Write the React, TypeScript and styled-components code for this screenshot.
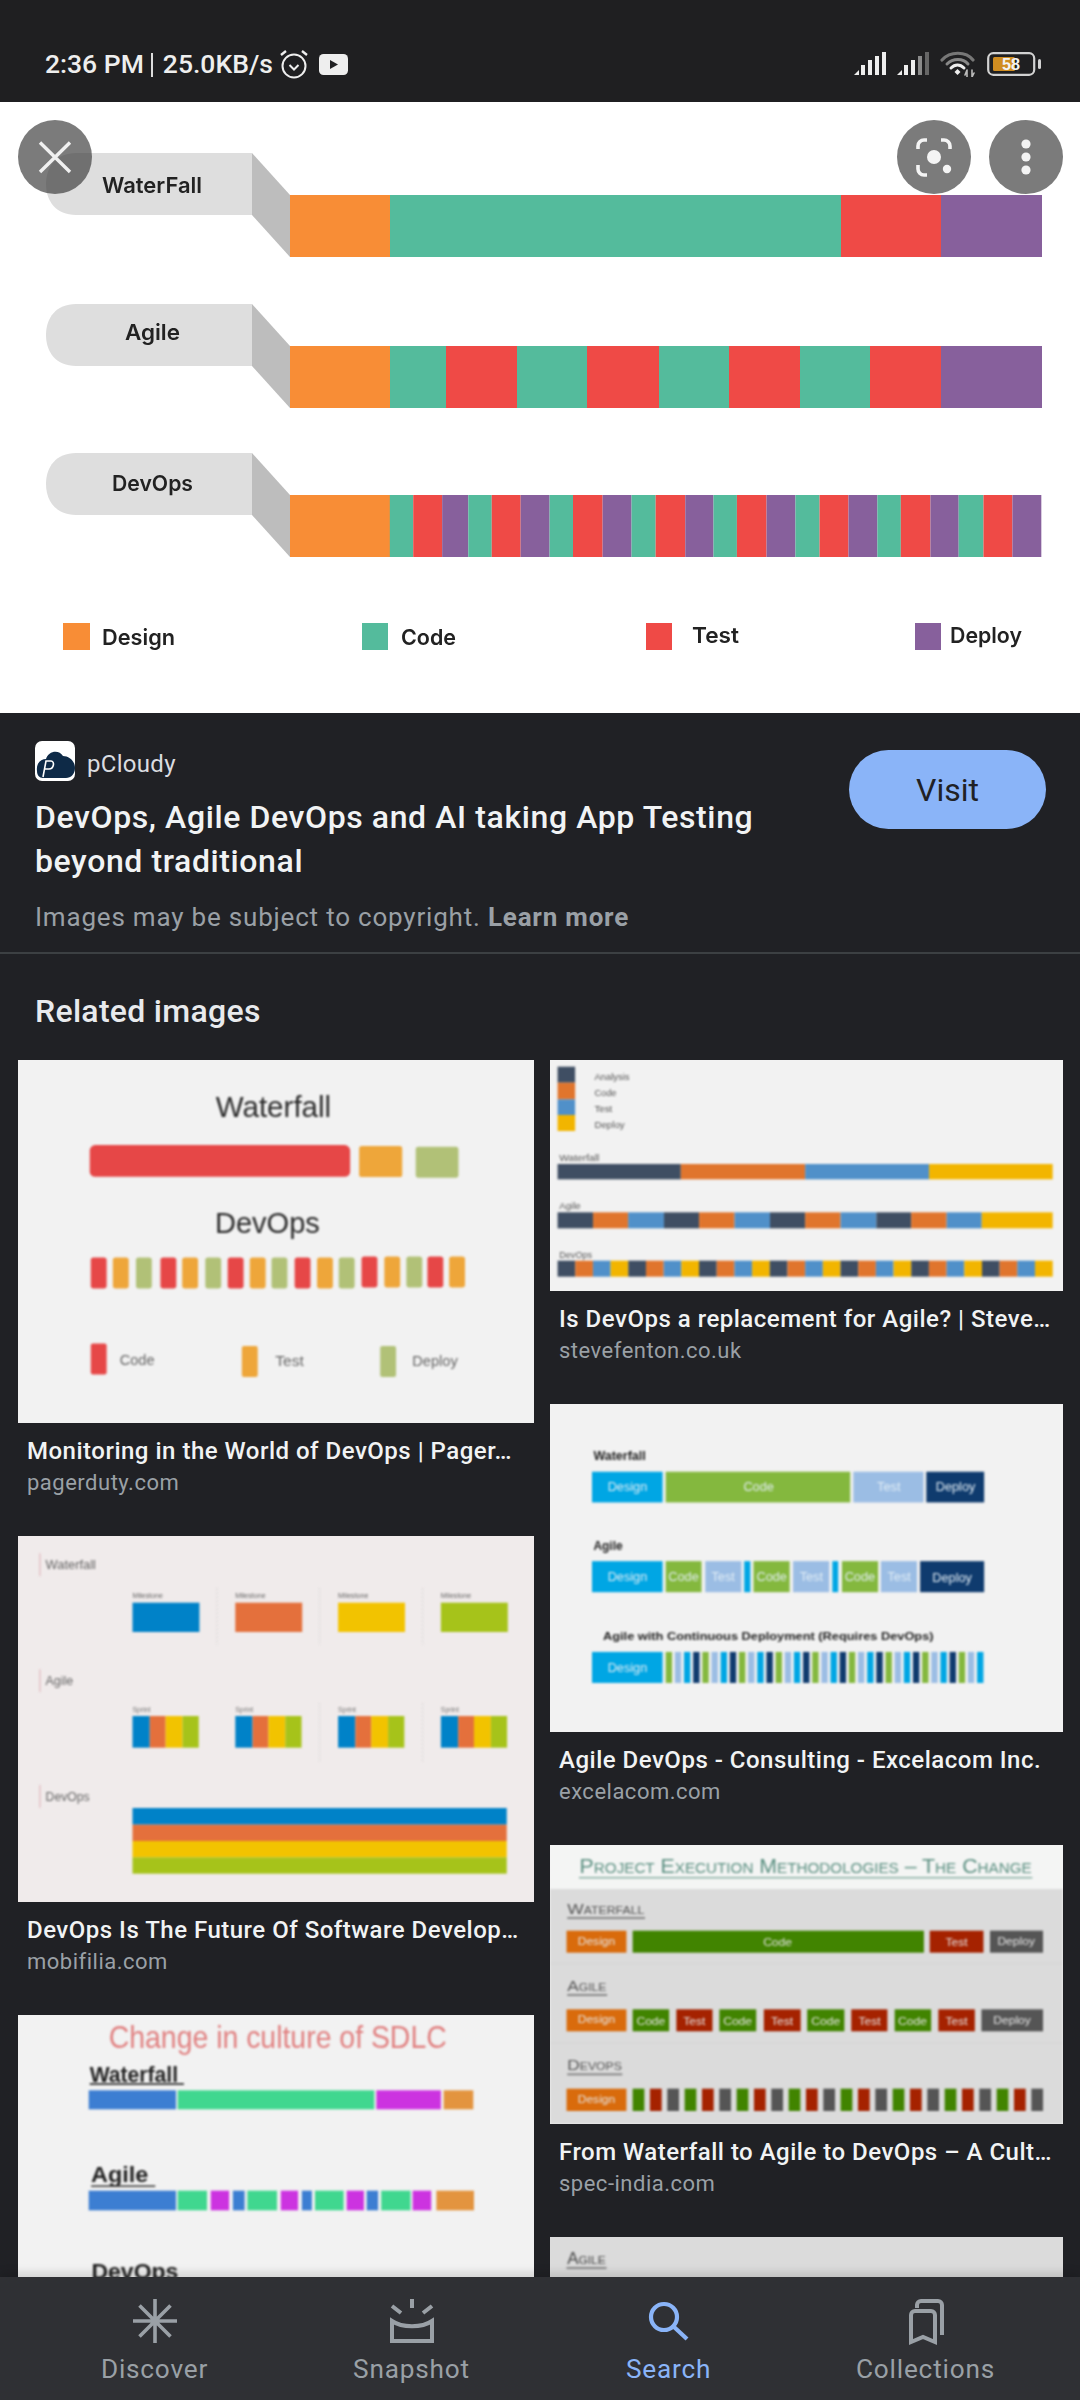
import React from 'react';
import styled, {createGlobalStyle} from 'styled-components';

const GlobalStyle = createGlobalStyle`
  html, body {
    margin: 0;
    padding: 0;
    background: #202125;
  }
`

const Page = styled.div`
  width: 1080px;
  height: 2400px;
  display: flex;
  flex-direction: column;
  overflow: hidden;
  background: #202125;
  font-family: Roboto, "Liberation Sans", sans-serif;
`
const StatusBar = styled.div`
  flex: 0 0 102px;
  box-sizing: border-box;
  padding: 26px 39px 0 45px;
  display: flex;
  align-items: center;
  background: #1f1f21;
  color: #eeeeee;
`
const Clock = styled.span`
  font-size: 26.5px;
  font-weight: 500;
  line-height: 32px;
  white-space: nowrap;
`
const Pipe = styled.span`
  width: 2px;
  height: 24px;
  margin: 2px 10px 0 7px;
  background: #dddddd;
`
const StatusLeft = styled.div`
  display: flex;
  align-items: center;
  flex: 1 1 auto;
`
const StatusRight = styled.div`
  display: flex;
  align-items: center;
  gap: 11px;
`
const Main = styled.main`
  flex: 1 1 auto;
  min-height: 0;
  overflow: hidden;
`
const Hero = styled.section`
  position: relative;
  height: 611px;
  background: #ffffff;
`
const Blurred = styled.svg<{$blur?: number}>`
  display: block;
  width: 100%;
  height: 100%;
  filter: blur(${p => p.$blur ?? 0.9}px);
`
const HeroActions = styled.div`
  position: absolute;
  top: 18px;
  left: 18px;
  right: 17px;
  display: flex;
  justify-content: space-between;
`
const ActionGroup = styled.div`
  display: flex;
  gap: 18px;
`
const RoundButton = styled.div`
  width: 74px;
  height: 74px;
  border-radius: 50%;
  background: rgba(60, 60, 60, 0.68);
  display: flex;
`
const InfoPanel = styled.section`
  display: flex;
  align-items: flex-start;
  border-bottom: 2px solid #3c4043;
  height: 241px;
  box-sizing: border-box;
`
const InfoText = styled.div`
  flex: 1 1 auto;
  padding: 28px 0 0 35px;
`
const SourceRow = styled.div`
  display: flex;
  align-items: center;
  gap: 12px;
  height: 40px;
`
const SourceLogo = styled.div`
  width: 40px;
  height: 40px;
  border-radius: 7px;
  background: #ffffff;
  overflow: hidden;
`
const SourceName = styled.span`
  padding-top: 5px;
  font-size: 24px;
  color: #dadce0;
  letter-spacing: 0.3px;
`
const ImageTitle = styled.h1`
  margin: 14px 0 0;
  max-width: 760px;
  font-size: 32px;
  font-weight: 500;
  line-height: 44px;
  letter-spacing: 0.6px;
  color: #f1f3f4;
`
const Copyright = styled.p`
  margin: 19px 0 0;
  font-size: 26px;
  line-height: 30px;
  letter-spacing: 0.8px;
  color: #9aa0a6;

  b {
    font-weight: 700;
  }
`
const VisitButton = styled.div`
  flex: 0 0 197px;
  height: 79px;
  margin: 37px 34px 0 0;
  border-radius: 40px;
  background: #8ab4f8;
  color: #202125;
  font-size: 32px;
  font-weight: 400;
  display: flex;
  align-items: center;
  justify-content: center;
`
const SectionTitle = styled.h2`
  margin: 0;
  padding: 39px 35px 31px;
  font-size: 32px;
  font-weight: 500;
  line-height: 36px;
  letter-spacing: 0.3px;
  color: #e8eaed;
`
const Columns = styled.div`
  display: grid;
  grid-template-columns: 516px 513px;
  column-gap: 16px;
  padding-left: 18px;
`
const Column = styled.div`
  display: flex;
  flex-direction: column;
`
const Thumb = styled.div<{$h: number; $bg?: string}>`
  height: ${p => p.$h}px;
  background: ${p => p.$bg ?? '#f2f2f2'};
  overflow: hidden;
`
const Caption = styled.div`
  height: 113px;
  box-sizing: border-box;
  padding: 12px 9px 0;
`
const CaptionTitle = styled.div`
  font-size: 24px;
  font-weight: 500;
  line-height: 32px;
  letter-spacing: 0.5px;
  white-space: nowrap;
  color: #f1f3f4;
`
const CaptionSite = styled.div`
  margin-top: 1px;
  font-size: 22px;
  line-height: 30px;
  letter-spacing: 0.5px;
  color: #9aa0a6;
`
const BottomNav = styled.nav`
  position: relative;
  flex: 0 0 123px;
  box-sizing: border-box;
  padding: 16px 26px 0;
  display: grid;
  grid-template-columns: repeat(4, 257px);
  background: #2f3034;
  box-shadow: 0 -5px 8px rgba(0, 0, 0, 0.12);
`
const NavItem = styled.div<{$active?: boolean}>`
  display: flex;
  flex-direction: column;
  align-items: center;
  color: ${p => (p.$active ? '#8ab4f8' : '#9aa0a6')};
`
const NavLabel = styled.span`
  margin-top: 5px;
  font-size: 26.2px;
  line-height: 30px;
  letter-spacing: 0.8px;
`
const T = styled.text`
  font-family: "Liberation Sans", Arial, sans-serif;
`
const HeroText = styled.text`
  font-family: Inter, "Liberation Sans", sans-serif;
  font-size: 22px;
  font-weight: 600;
  fill: #222222;
`

type Span = [number, number, string];

// contiguous segments: edges[i]..edges[i+1], colours repeat
const Segments = ({edges, colors, y, h}: {edges: number[]; colors: string[]; y: number; h: number}) => (
    <>
        {edges.slice(0, -1).map((e, i) => (
            <rect key={i} x={e} y={y} width={edges[i + 1] - e} height={h} fill={colors[i % colors.length]}/>
        ))}
    </>
)
const Blocks = ({spans, y, h, rx}: {spans: Span[]; y: number; h: number; rx?: number}) => (
    <>
        {spans.map(([a, b, c], i) => (
            <rect key={i} x={a} y={y} width={b - a} height={h} rx={rx} fill={c}/>
        ))}
    </>
)
const Strips = ({start, step, width, count, colors, y, h}: {start: number; step: number; width: number; count: number; colors: string[]; y: number; h: number}) => (
    <>
        {Array.from({length: count}, (_, i) => (
            <rect key={i} x={start + i * step} y={y} width={width} height={h} fill={colors[i % colors.length]}/>
        ))}
    </>
)

const ORANGE = '#f88d36', TEAL = '#54bb9c', RED = '#ef4a46', PURPLE = '#87609c';

const HeroLabel = ({y, base, text, x, w}: {y: number; base: number; text: string; x: number; w: number}) => (
    <>
        <path d={`M252 ${y} L290 ${y + 42} V${y + 104} L252 ${y + 62} Z`} fill="#bdbdbd"/>
        <path d={`M76 ${y} H252 V${y + 62} H76 C56 ${y + 62} 46 ${y + 48} 46 ${y + 31} C46 ${y + 14} 56 ${y} 76 ${y} Z`} fill="#dedede"/>
        <HeroText x={x} y={base} textLength={w} lengthAdjust="spacingAndGlyphs">{text}</HeroText>
    </>
)

const HeroChart = () => (
    <Blurred viewBox="0 102 1080 611" $blur={0.5}>
        <HeroLabel y={153} base={193} text="WaterFall" x={102} w={100}/>
        <HeroLabel y={304} base={340} text="Agile" x={125} w={55}/>
        <HeroLabel y={453} base={491} text="DevOps" x={112} w={81}/>
        <Segments y={195} h={62} edges={[290, 390, 841, 941, 1042]} colors={[ORANGE, TEAL, RED, PURPLE]}/>
        <Segments y={346} h={62} edges={[290, 390, 446, 517, 587, 659, 729, 800, 870, 941, 1042]}
                  colors={[ORANGE, TEAL, RED, TEAL, RED, TEAL, RED, TEAL, RED, PURPLE]}/>
        <rect x={290} y={495} width={100} height={62} fill={ORANGE}/>
        <Segments y={495} h={62}
                  edges={[566, 600, 642, 680, 714, 756, 798, 832, 875, 917, 952, 995, 1036, 1070, 1113, 1155, 1190, 1232, 1274, 1308, 1351, 1392, 1428, 1470, 1512].map(z => z / 1.452)}
                  colors={[TEAL, RED, PURPLE]}/>
        <rect x={63} y={623} width={27} height={27} fill={ORANGE}/>
        <HeroText x={102} y={645} textLength={73} lengthAdjust="spacingAndGlyphs">Design</HeroText>
        <rect x={362} y={623} width={26} height={27} fill={TEAL}/>
        <HeroText x={401} y={645} textLength={55} lengthAdjust="spacingAndGlyphs">Code</HeroText>
        <rect x={646} y={623} width={26} height={27} fill={RED}/>
        <HeroText x={692} y={643} textLength={47} lengthAdjust="spacingAndGlyphs">Test</HeroText>
        <rect x={915} y={623} width={26} height={27} fill={PURPLE}/>
        <HeroText x={950} y={643} textLength={72} lengthAdjust="spacingAndGlyphs">Deploy</HeroText>
    </Blurred>
)

// thumbnails are drawn in a 3x coordinate space, roughly 3 units per screen pixel
const PagerDuty = () => {
    const red = '#e64747', amber = '#eea63a', olive = '#b1c177';
    const small = [263, 327, 394, 465, 528, 595, 660, 724, 787, 854, 919, 982, 1048, 1114, 1178, 1239, 1302];
    return (
        <Blurred viewBox="52 30 1496 1088" preserveAspectRatio="none">
            <T x={625} y={200} fontSize={88} fill="#2a2a2a" textLength={335} lengthAdjust="spacingAndGlyphs">Waterfall</T>
            <rect x={260} y={285} width={755} height={95} rx={16} fill={red}/>
            <rect x={1041} y={288} width={125} height={93} rx={8} fill={amber}/>
            <rect x={1205} y={290} width={124} height={93} rx={8} fill={olive}/>
            <T x={623} y={548} fontSize={88} fill="#2a2a2a" textLength={304} lengthAdjust="spacingAndGlyphs">DevOps</T>
            {small.map((x, i) => (
                <rect key={x} x={x} y={i > 11 ? 619 : 622} width={46} height={93} rx={8} fill={[red, amber, olive][i % 3]}/>
            ))}
            <rect x={263} y={880} width={46} height={93} rx={6} fill={red}/>
            <T x={347} y={945} fontSize={43} fill="#666" textLength={101} lengthAdjust="spacingAndGlyphs">Code</T>
            <rect x={701} y={887} width={46} height={93} rx={6} fill={amber}/>
            <T x={798} y={948} fontSize={43} fill="#666" textLength={83} lengthAdjust="spacingAndGlyphs">Test</T>
            <rect x={1102} y={887} width={46} height={93} rx={6} fill={olive}/>
            <T x={1195} y={948} fontSize={43} fill="#666" textLength={132} lengthAdjust="spacingAndGlyphs">Deploy</T>
        </Blurred>
    )
}

const SteveFenton = () => {
    const navy = '#3f4e63', orange = '#e0752d', blue = '#5090c9', yellow = '#f2b500';
    const four = [navy, orange, blue, yellow];
    return (
        <Blurred viewBox="29 30 1490 693" preserveAspectRatio="none">
            <rect x={51} y={50} width={51} height={48} fill={navy}/>
            <rect x={51} y={98} width={51} height={50} fill={orange}/>
            <rect x={51} y={148} width={51} height={47} fill={blue}/>
            <rect x={51} y={195} width={51} height={48} fill={yellow}/>
            <T x={158} y={90} fontSize={26} fill="#555" textLength={102} lengthAdjust="spacingAndGlyphs">Analysis</T>
            <T x={158} y={138} fontSize={26} fill="#555" textLength={64} lengthAdjust="spacingAndGlyphs">Code</T>
            <T x={158} y={186} fontSize={26} fill="#555" textLength={52} lengthAdjust="spacingAndGlyphs">Test</T>
            <T x={158} y={235} fontSize={26} fill="#555" textLength={88} lengthAdjust="spacingAndGlyphs">Deploy</T>
            <T x={56} y={333} fontSize={26} fill="#555" textLength={116} lengthAdjust="spacingAndGlyphs">Waterfall</T>
            <Segments y={342} h={46} edges={[51, 409, 770, 1130, 1489]} colors={four}/>
            <T x={56} y={478} fontSize={26} fill="#555" textLength={62} lengthAdjust="spacingAndGlyphs">Agile</T>
            <Segments y={487} h={48} edges={[51, 154, 256, 360, 462, 565, 668, 770, 873, 977, 1078, 1181, 1283, 1489]}
                      colors={[navy, orange, blue, navy, orange, blue, navy, orange, blue, navy, orange, blue, yellow]}/>
            <T x={56} y={625} fontSize={26} fill="#555" textLength={95} lengthAdjust="spacingAndGlyphs">DevOps</T>
            <Segments y={632} h={48} edges={Array.from({length: 29}, (_, i) => 51 + i * 51.36)} colors={four}/>
        </Blurred>
    )
}

const Excelacom = () => {
    const sky = '#00a6e4', green = '#84b83e', pale = '#9bbde4', navy = '#0f3b6e';
    const ink = '#222';
    const on = {fontSize: 37, fill: '#e3eef5', textAnchor: 'middle' as const};
    return (
        <Blurred viewBox="29 12 1490 983" preserveAspectRatio="none">
            <T x={155} y={180} fontSize={36} fontWeight={700} fill={ink} textLength={152} lengthAdjust="spacingAndGlyphs">Waterfall</T>
            <Blocks y={215} h={92} spans={[[151, 356, sky], [365, 901, green], [910, 1114, pale], [1122, 1290, navy]]}/>
            <T x={254} y={274} {...on}>Design</T>
            <T x={635} y={274} {...on}>Code</T>
            <T x={1013} y={274} {...on}>Test</T>
            <T x={1207} y={274} {...on}>Deploy</T>
            <T x={155} y={450} fontSize={36} fontWeight={700} fill={ink} textLength={85} lengthAdjust="spacingAndGlyphs">Agile</T>
            <Blocks y={483} h={93} spans={[
                [151, 356, sky], [365, 469, green], [480, 585, pale], [593, 611, sky], [620, 725, green], [735, 840, pale],
                [849, 866, sky], [877, 982, green], [990, 1095, pale], [1104, 1290, navy]]}/>
            <T x={254} y={543} {...on}>Design</T>
            <T x={417} y={543} {...on}>Code</T>
            <T x={532} y={543} {...on}>Test</T>
            <T x={673} y={543} {...on}>Code</T>
            <T x={788} y={543} {...on}>Test</T>
            <T x={929} y={543} {...on}>Code</T>
            <T x={1043} y={543} {...on}>Test</T>
            <T x={1197} y={546} {...on}>Deploy</T>
            <T x={183} y={720} fontSize={35} fontWeight={700} fill={ink} textLength={960} lengthAdjust="spacingAndGlyphs">Agile with Continuous Deployment (Requires DevOps)</T>
            <rect x={151} y={755} width={205} height={93} fill={sky}/>
            <T x={254} y={815} {...on}>Design</T>
            <Strips y={755} h={93} start={365} step={26.6} width={18.5} count={35} colors={[green, pale, sky, navy]}/>
        </Blurred>
    )
}

const Mobifilia = () => {
    const blue = '#0082c8', orange = '#e4703c', yellow = '#f2c300', lime = '#a6c31a';
    const cols = [384, 682, 980, 1278];
    const sprint = [0, 50, 96, 145, 192];
    return (
        <Blurred viewBox="52 18 1496 1098" preserveAspectRatio="none">
            {[70, 418, 765].map(y => <rect key={y} x={113} y={y} width={5} height={68} fill="#e6c8cc"/>)}
            <T x={132} y={118} fontSize={38} fill="#666" textLength={146} lengthAdjust="spacingAndGlyphs">Waterfall</T>
            <T x={132} y={465} fontSize={38} fill="#666" textLength={80} lengthAdjust="spacingAndGlyphs">Agile</T>
            <T x={132} y={813} fontSize={38} fill="#666" textLength={128} lengthAdjust="spacingAndGlyphs">DevOps</T>
            {cols.map((x, i) => (
                <React.Fragment key={x}>
                    <T x={x} y={205} fontSize={22} fill="#666" textLength={88} lengthAdjust="spacingAndGlyphs">Milestone</T>
                    <rect x={x} y={218} width={194} height={88} fill={[blue, orange, yellow, lime][i]}/>
                    <T x={x} y={545} fontSize={22} fill="#777" textLength={52} lengthAdjust="spacingAndGlyphs">Sprint</T>
                    <Segments y={558} h={95} edges={sprint.map(s => s + x)} colors={[blue, orange, yellow, lime]}/>
                </React.Fragment>
            ))}
            {[629, 926, 1225].map(x => (
                <line key={x} x1={x} x2={x} y1={175} y2={345} stroke="#d8d6d6" strokeWidth={3} strokeDasharray="6 6"/>
            ))}
            {[926, 1225].map(x => (
                <line key={x} x1={x} x2={x} y1={520} y2={695} stroke="#d8d6d6" strokeWidth={3} strokeDasharray="6 6"/>
            ))}
            <rect x={384} y={834} width={1085} height={50} fill={blue}/>
            <rect x={384} y={884} width={1085} height={49} fill={orange}/>
            <rect x={384} y={933} width={1085} height={49} fill={yellow}/>
            <rect x={384} y={982} width={1085} height={49} fill={lime}/>
        </Blurred>
    )
}

const SpecIndia = () => {
    const orange = '#d96b0c', green = '#418400', red = '#a52200', grey = '#555555';
    const on = {fontSize: 35, fill: '#e6e6e6', textAnchor: 'middle' as const};
    const heading = {fontSize: 46, fill: '#555', fontVariant: 'small-caps', lengthAdjust: 'spacingAndGlyphs' as const};
    return (
        <Blurred viewBox="29 48 1490 837" preserveAspectRatio="none">
            <rect x={29} y={48} width={1490} height={132} fill="#f4f5f4"/>
            <rect x={29} y={180} width={1490} height={705} fill="#dbdbdb"/>
            <T x={115} y={132} fontSize={58} fill="#5a8f80" fontVariant="small-caps" textLength={1313} lengthAdjust="spacingAndGlyphs">Project Execution Methodologies – The Change</T>
            <rect x={113} y={144} width={1317} height={4} fill="#7ea99c"/>

            <T x={79} y={255} {...heading} textLength={224}>Waterfall</T>
            <rect x={79} y={264} width={226} height={6} fill="#888"/>
            <Blocks y={305} h={66} spans={[[77, 251, orange], [269, 1115, green], [1132, 1288, red], [1307, 1461, grey]]}/>
            <T x={164} y={347} {...on}>Design</T>
            <T x={690} y={352} {...on}>Code</T>
            <T x={1210} y={350} {...on}>Test</T>
            <T x={1383} y={349} {...on}>Deploy</T>
            <rect x={29} y={402} width={1490} height={3} fill="#d5d5d5"/>

            <T x={79} y={487} {...heading} textLength={114}>Agile</T>
            <rect x={79} y={495} width={116} height={6} fill="#888"/>
            <Blocks y={541} h={66} spans={[
                [77, 251, orange], [269, 375, green], [396, 501, red], [521, 628, green], [650, 757, red], [776, 884, green],
                [904, 1009, red], [1030, 1136, green], [1157, 1263, red], [1282, 1461, grey]]}/>
            <T x={164} y={583} {...on}>Design</T>
            {[322, 574, 830, 1082].map(x => <T key={x} x={x} y={587} {...on}>Code</T>)}
            {[448, 703, 957, 1210].map(x => <T key={x} x={x} y={587} {...on}>Test</T>)}
            <T x={1371} y={586} {...on}>Deploy</T>
            <rect x={29} y={641} width={1490} height={3} fill="#d5d5d5"/>

            <T x={79} y={724} {...heading} textLength={159}>Devops</T>
            <rect x={79} y={733} width={160} height={6} fill="#888"/>
            <rect x={77} y={779} width={174} height={67} fill={orange}/>
            <T x={164} y={821} {...on}>Design</T>
            <Strips y={779} h={67} start={269} step={50.35} width={34} count={24} colors={[green, red, grey]}/>
        </Blurred>
    )
}

const AgileTeaser = () => (
    <Blurred viewBox="29 1224 1490 600" preserveAspectRatio="none">
        <T x={79} y={1305} fontSize={50} fill="#444" fontVariant="small-caps" textLength={112} lengthAdjust="spacingAndGlyphs">Agile</T>
        <rect x={77} y={1314} width={116} height={6} fill="#888"/>
    </Blurred>
)

const CultureChart = () => {
    const blue = '#3c7ed2', green = '#40d78f', pink = '#cc33e0', orange = '#e3943f';
    return (
        <Blurred viewBox="52 45 1496 1098" preserveAspectRatio="none">
            <T x={315} y={145} fontSize={96} fill="#e08080" textLength={980} lengthAdjust="spacingAndGlyphs">Change in culture of SDLC</T>
            <T x={260} y={245} fontSize={66} fontWeight={700} fill="#222" textLength={256} lengthAdjust="spacingAndGlyphs">Waterfall</T>
            <rect x={260} y={249} width={273} height={6} fill="#444"/>
            <Blocks y={271} h={57} spans={[[257, 510, blue], [515, 1085, green], [1091, 1278, pink], [1286, 1372, orange]]}/>
            <T x={264} y={545} fontSize={66} fontWeight={700} fill="#222" textLength={166} lengthAdjust="spacingAndGlyphs">Agile</T>
            <rect x={264} y={556} width={186} height={5} fill="#444"/>
            <Blocks y={572} h={59} spans={[
                [257, 510, blue], [515, 600, green], [611, 664, pink], [675, 709, blue], [717, 803, green], [814, 864, pink],
                [875, 904, blue], [913, 996, green], [1005, 1055, pink], [1063, 1096, blue], [1105, 1190, green], [1196, 1250, pink], [1265, 1374, orange]]}/>
            <T x={265} y={838} fontSize={66} fontWeight={700} fill="#222" textLength={252} lengthAdjust="spacingAndGlyphs">DevOps</T>
        </Blurred>
    )
}

const SignalIcon = ({dim}: {dim?: boolean}) => (
    <svg width="32" height="24" viewBox="0 0 32 24">
        <path d="M0 23 L5 18 V23 Z" fill="#eee"/>
        <rect x="7" y="13" width="4" height="10" fill="#eee"/>
        <rect x="14" y="8" width="4" height="15" fill="#eee"/>
        <rect x="21" y="4" width="4" height="19" fill={dim ? '#8a8a8a' : '#eee'}/>
        <rect x="28" y="0" width="4" height="23" fill={dim ? '#666' : '#eee'}/>
    </svg>
)

const WifiIcon = () => (
    <svg width="36" height="26" viewBox="0 0 36 26" fill="none" strokeLinecap="round">
        <path d="M2 9 C10 0 26 0 33 9" stroke="#777" strokeWidth="3.2"/>
        <path d="M7 13 C13 7 23 7 28 13" stroke="#888" strokeWidth="3"/>
        <path d="M11 17 C15 13 20 13 24 17" stroke="#eee" strokeWidth="3"/>
        <path d="M14.5 21 L17.5 18 L20.5 21 L17.5 24 Z" fill="#eee"/>
        <path d="M27 19 V26 M27 19 L25 24 M32 19 V26 M32 26 L34 22" stroke="#bbb" strokeWidth="1.6"/>
    </svg>
)

const BatteryIcon = () => (
    <svg width="54" height="24" viewBox="0 0 54 24">
        <rect x="1.2" y="1.2" width="46" height="21.6" rx="5" fill="none" stroke="#d2d2d2" strokeWidth="2.2"/>
        <rect x="6" y="5" width="22" height="14" rx="1.5" fill="#d08d21"/>
        <rect x="51" y="7" width="3" height="10" rx="1.5" fill="#d2d2d2"/>
        <T x="15" y="18" fontSize="17" fontWeight="700" fill="#f3f3f3" textLength="18" lengthAdjust="spacingAndGlyphs">58</T>
    </svg>
)

const App = () => (
    <Page>
        <GlobalStyle/>
        <StatusBar>
            <StatusLeft>
                <Clock>2:36 PM</Clock>
                <Pipe/>
                <Clock>25.0KB/s</Clock>
                <svg width="30" height="30" viewBox="0 0 30 30" fill="none" stroke="#eee" style={{margin: '0 10px 0 6px'}}>
                    <circle cx="15" cy="17" r="11.5" strokeWidth="2"/>
                    <path d="M10.5 16 L15 20.5 L19.5 16" strokeWidth="2"/>
                    <path d="M2 6 L7 2 M28 6 L23 2" strokeWidth="2.4"/>
                </svg>
                <svg width="29" height="21" viewBox="0 0 29 21">
                    <rect width="29" height="21" rx="4.5" fill="#eee"/>
                    <path d="M11 6 L19 10.5 L11 15 Z" fill="#1f1f21"/>
                </svg>
            </StatusLeft>
            <StatusRight>
                <SignalIcon/>
                <SignalIcon dim/>
                <WifiIcon/>
                <BatteryIcon/>
            </StatusRight>
        </StatusBar>
        <Main>
            <Hero>
                <HeroChart/>
                <HeroActions>
                    <RoundButton>
                        <svg width="74" height="74" viewBox="0 0 74 74" stroke="#f0f0f0" strokeWidth="3.4">
                            <path d="M22 22.5 L52 52 M52 22.5 L22 52"/>
                        </svg>
                    </RoundButton>
                    <ActionGroup>
                        <RoundButton>
                            <svg width="74" height="74" viewBox="0 0 74 74" fill="none" stroke="#f4f4f4" strokeWidth="3.6">
                                <path d="M21 29 V26 a6 6 0 0 1 6-6 h3 M44 20 h3 a6 6 0 0 1 6 6 v3 M21 45 v4 a6 6 0 0 0 6 6 h3"/>
                                <circle cx="37" cy="37" r="7" fill="#f4f4f4" stroke="none"/>
                                <circle cx="50" cy="49" r="4.2" fill="#f4f4f4" stroke="none"/>
                            </svg>
                        </RoundButton>
                        <RoundButton>
                            <svg width="74" height="74" viewBox="0 0 74 74" fill="#f4f4f4">
                                <circle cx="37" cy="24" r="4.6"/>
                                <circle cx="37" cy="37" r="4.6"/>
                                <circle cx="37" cy="50" r="4.6"/>
                            </svg>
                        </RoundButton>
                    </ActionGroup>
                </HeroActions>
            </Hero>
            <InfoPanel>
                <InfoText>
                    <SourceRow>
                        <SourceLogo>
                            <svg width="40" height="40" viewBox="0 0 40 40">
                                <path d="M2 30 C1 22 6 18 11 18 C13 10 24 8 28 15 C34 15 40 20 40 27 C40 33 36 37 31 37 H8 C4 37 2 34 2 30 Z" fill="#0e2a47"/>
                                <path d="M8 36 L11 20 H16 C20 20 19 28 14 28 H10" fill="none" stroke="#ffffff" strokeWidth="1.6"/>
                            </svg>
                        </SourceLogo>
                        <SourceName>pCloudy</SourceName>
                    </SourceRow>
                    <ImageTitle>DevOps, Agile DevOps and AI taking App Testing beyond traditional</ImageTitle>
                    <Copyright>Images may be subject to copyright. <b>Learn more</b></Copyright>
                </InfoText>
                <VisitButton>Visit</VisitButton>
            </InfoPanel>
            <SectionTitle>Related images</SectionTitle>
            <Columns>
                <Column>
                    <Thumb $h={363}><PagerDuty/></Thumb>
                    <Caption>
                        <CaptionTitle>Monitoring in the World of DevOps | Pager…</CaptionTitle>
                        <CaptionSite>pagerduty.com</CaptionSite>
                    </Caption>
                    <Thumb $h={366} $bg="#f0ebeb"><Mobifilia/></Thumb>
                    <Caption>
                        <CaptionTitle>DevOps Is The Future Of Software Develop…</CaptionTitle>
                        <CaptionSite>mobifilia.com</CaptionSite>
                    </Caption>
                    <Thumb $h={366}><CultureChart/></Thumb>
                </Column>
                <Column>
                    <Thumb $h={231}><SteveFenton/></Thumb>
                    <Caption>
                        <CaptionTitle>Is DevOps a replacement for Agile? | Steve…</CaptionTitle>
                        <CaptionSite>stevefenton.co.uk</CaptionSite>
                    </Caption>
                    <Thumb $h={328}><Excelacom/></Thumb>
                    <Caption>
                        <CaptionTitle>Agile DevOps - Consulting - Excelacom Inc.</CaptionTitle>
                        <CaptionSite>excelacom.com</CaptionSite>
                    </Caption>
                    <Thumb $h={279}><SpecIndia/></Thumb>
                    <Caption>
                        <CaptionTitle>From Waterfall to Agile to DevOps – A Cult…</CaptionTitle>
                        <CaptionSite>spec-india.com</CaptionSite>
                    </Caption>
                    <Thumb $h={200} $bg="#dbdbdb"><AgileTeaser/></Thumb>
                </Column>
            </Columns>
        </Main>
        <BottomNav>
            <NavItem>
                <svg width="56" height="56" viewBox="0 0 56 56" stroke="currentColor" strokeWidth="3.6">
                    <path d="M28 6 V50 M6 28 H50 M12.5 12.5 L43.5 43.5 M43.5 12.5 L12.5 43.5"/>
                    <circle cx="28" cy="28" r="4" fill="currentColor" stroke="none"/>
                </svg>
                <NavLabel>Discover</NavLabel>
            </NavItem>
            <NavItem>
                <svg width="56" height="56" viewBox="0 0 56 56" fill="none" stroke="currentColor" strokeWidth="4">
                    <path d="M28 6 V15 M8 13 L17 20 M48 13 L39 20"/>
                    <path d="M8 28 C18 35 38 35 48 28 V48 H8 Z"/>
                </svg>
                <NavLabel>Snapshot</NavLabel>
            </NavItem>
            <NavItem $active>
                <svg width="56" height="56" viewBox="0 0 56 56" fill="none" stroke="currentColor" strokeWidth="4.2">
                    <circle cx="23" cy="24" r="13"/>
                    <path d="M32.5 33.5 L46 46"/>
                </svg>
                <NavLabel>Search</NavLabel>
            </NavItem>
            <NavItem>
                <svg width="56" height="56" viewBox="0 0 56 56" fill="none" stroke="currentColor" strokeWidth="4">
                    <path d="M13 49 V22 a4 4 0 0 1 4-4 H33 a4 4 0 0 1 4 4 V49 L25 44 Z"/>
                    <path d="M19 15 V12 a4 4 0 0 1 4-4 H40 a4 4 0 0 1 4 4 V42"/>
                </svg>
                <NavLabel>Collections</NavLabel>
            </NavItem>
        </BottomNav>
    </Page>
)

export default App;
